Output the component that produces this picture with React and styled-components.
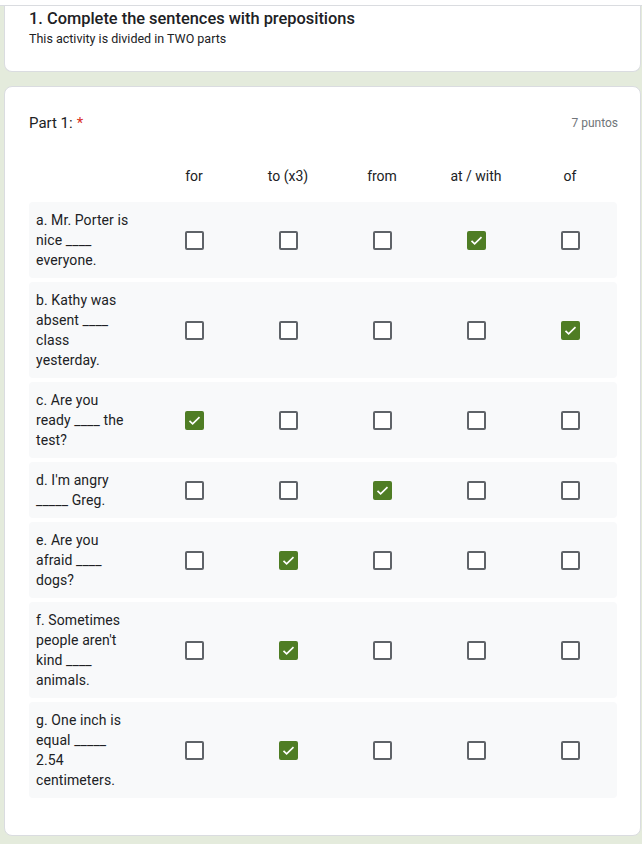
import React from 'react';
import styled, { createGlobalStyle } from 'styled-components';

const GlobalStyle = createGlobalStyle`
  html, body {
    margin: 0;
    padding: 0;
    background-color: #e4ebdc;
    font-family: Roboto, "Liberation Sans", Arial, sans-serif;
    color: #202124;
  }
`;

const Page = styled.div`
  width: 642px;
  overflow: hidden;
`;

const TopStrip = styled.div`
  height: 5px;
  background-color: #ffffff;
  border-bottom: 1px solid #dadce0;
`;

const Card = styled.div`
  background-color: #ffffff;
  margin: ${(p) => p.$margin};
  width: 637px;
  border-radius: 8px;
  border: 1px solid #dadce0;
  box-sizing: border-box;
`;

const HeaderCard = styled(Card)`
  border-top: none;
  border-radius: 0 0 8px 8px;
  padding: 3px 24px 24px 24px;
  height: 66px;
`;

const QuestionCard = styled(Card)`
  padding: 24px 23px 37px 24px;
`;

const Title = styled.div`
  font-size: 16.4px;
  font-weight: 500;
  line-height: 20px;
  color: #202124;
`;

const Subtitle = styled.div`
  font-size: 12.5px;
  line-height: 16px;
  margin-top: 2px;
`;

const QuestionHead = styled.div`
  display: flex;
  justify-content: space-between;
  align-items: center;
  height: 24px;
`;

const QuestionTitle = styled.div`
  font-size: 15px;
  line-height: 24px;
`;

const Required = styled.span`
  color: #d93025;
  margin-left: 4px;
`;

const Points = styled.div`
  font-size: 12px;
  color: #70757a;
  margin-right: -1px;
`;

const Grid = styled.div`
  margin-top: 19px;
  display: flex;
  flex-direction: column;
  gap: 4px;
`;

const Row = styled.div`
  display: grid;
  grid-template-columns: 118px repeat(5, 94px);
  align-items: center;
  background-color: ${(p) => (p.$head ? 'transparent' : '#f8f9fa')};
  min-height: ${(p) => (p.$head ? '44px' : 'auto')};
  border-radius: 4px;
`;

const Label = styled.div`
  font-size: 14px;
  line-height: 20px;
  padding: 8px 12px 8px 7px;
  letter-spacing: 0.1px;
`;

const ColHead = styled.div`
  font-size: 14px;
  line-height: 20px;
  text-align: center;
  color: #202124;
`;

const Cell = styled.div`
  display: flex;
  justify-content: center;
  align-items: center;
`;

const Box = styled.div`
  width: 19px;
  height: 19px;
  box-sizing: border-box;
  border-radius: 2px;
  border: 2px solid ${(p) => (p.$checked ? '#4f7d24' : '#5f6368')};
  background-color: ${(p) => (p.$checked ? '#4f7d24' : '#ffffff')};
  display: flex;
  align-items: center;
  justify-content: center;
`;

const columns = ['for', 'to (x3)', 'from', 'at / with', 'of'];

const rows = [
  { text: 'a. Mr. Porter is nice ____ everyone.', answer: 3 },
  { text: 'b. Kathy was absent ____ class yesterday.', answer: 4 },
  { text: 'c. Are you ready ____ the test?', answer: 0 },
  { text: "d. I'm angry _____ Greg.", answer: 2 },
  { text: 'e. Are you afraid ____ dogs?', answer: 1 },
  { text: "f. Sometimes people aren't kind ____ animals.", answer: 1 },
  { text: 'g. One inch is equal _____ 2.54 centimeters.', answer: 1 },
];

const Check = () => (
  <svg width="15" height="15" viewBox="0 0 24 24">
    <path d="M4 12.5l5 5L20 6.5" fill="none" stroke="#ffffff" strokeWidth="2.6" />
  </svg>
);

const App = () => (
  <Page>
    <GlobalStyle />
    <TopStrip />
    <HeaderCard $margin="0 0 0 4px">
      <Title>1. Complete the sentences with prepositions</Title>
      <Subtitle>This activity is divided in TWO parts</Subtitle>
    </HeaderCard>
    <QuestionCard $margin="14px 0 8px 4px">
      <QuestionHead>
        <QuestionTitle>
          Part 1:<Required>*</Required>
        </QuestionTitle>
        <Points>7 puntos</Points>
      </QuestionHead>
      <Grid>
        <Row $head>
          <div />
          {columns.map((c) => (
            <ColHead key={c}>{c}</ColHead>
          ))}
        </Row>
        {rows.map((r, i) => (
          <Row key={i}>
            <Label>{r.text}</Label>
            {columns.map((c, j) => (
              <Cell key={c}>
                <Box $checked={r.answer === j}>{r.answer === j && <Check />}</Box>
              </Cell>
            ))}
          </Row>
        ))}
      </Grid>
    </QuestionCard>
  </Page>
);

export default App;
